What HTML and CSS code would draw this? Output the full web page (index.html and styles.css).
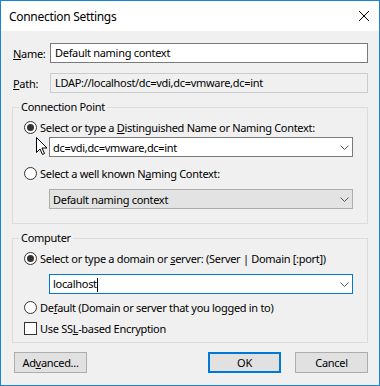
FILE: index.html
```html
<!DOCTYPE html>
<html lang="en">
<head>
    <meta charset="UTF-8">
    <title>Connection Settings</title>
    <link rel="stylesheet" href="styles.css">
</head>
<body>
    <div class="window">
        <div class="titlebar">
            <span class="title">Connection Settings</span>
            <span class="close">
                <svg width="10" height="10" viewBox="0 0 10 10"><path d="M0 0 L10 10 M10 0 L0 10" stroke="#000" stroke-width="1"/></svg>
            </span>
        </div>
        <div class="content">
            <div class="field-row">
                <label class="field-label"><u>N</u>ame:</label>
                <div class="textbox">Default naming context</div>
            </div>
            <div class="field-row path-row">
                <label class="field-label"><u>P</u>ath:</label>
                <div class="textbox readonly">LDAP://localhost/dc=vdi,dc=vmware,dc=int</div>
            </div>

            <fieldset class="group">
                <legend>Connection Point</legend>
                <div class="option">
                    <span class="radio checked"></span>
                    <span>Select or type a <u>D</u>istinguished Name or Naming Context:</span>
                </div>
                <div class="combo">
                    <span class="combo-text">dc=vdi,dc=vmware,dc=int</span>
                    <svg class="chevron" width="9" height="5" viewBox="0 0 9 5"><path d="M0.5 0.5 L4.5 4.5 L8.5 0.5" fill="none" stroke="#555" stroke-width="1"/></svg>
                </div>
                <div class="option spaced">
                    <span class="radio"></span>
                    <span>Select a well known N<u>a</u>ming Context:</span>
                </div>
                <div class="combo disabled spaced-combo">
                    <span class="combo-text">Default naming context</span>
                    <svg class="chevron" width="9" height="5" viewBox="0 0 9 5"><path d="M0.5 0.5 L4.5 4.5 L8.5 0.5" fill="none" stroke="#555" stroke-width="1"/></svg>
                </div>
            </fieldset>

            <fieldset class="group computer">
                <legend>Computer</legend>
                <div class="option">
                    <span class="radio checked"></span>
                    <span>Select or type a domain or <u>s</u>erver: (Server | Domain [:port])</span>
                </div>
                <div class="combo focused spaced-combo">
                    <span class="combo-text">localhost<span class="caret"></span></span>
                    <svg class="chevron" width="9" height="5" viewBox="0 0 9 5"><path d="M0.5 0.5 L4.5 4.5 L8.5 0.5" fill="none" stroke="#555" stroke-width="1"/></svg>
                </div>
                <div class="option near">
                    <span class="radio"></span>
                    <span>De<u>f</u>ault (Domain or server that you logged in to)</span>
                </div>
                <div class="option near">
                    <span class="checkbox"></span>
                    <span>Use SS<u>L</u>-based Encryption</span>
                </div>
            </fieldset>

            <div class="buttons">
                <button class="btn">Ad<u>v</u>anced...</button>
                <div class="spacer"></div>
                <button class="btn default">OK</button>
                <button class="btn">Cancel</button>
            </div>
        </div>

        <!-- mouse pointer over the first radio button -->
        <svg class="pointer" width="13" height="19" viewBox="0 0 13 19">
            <path d="M0.5 0.5 L0.5 15.5 L4 12 L6.5 17.5 L8.5 16.5 L6 11 L11 11 Z" fill="#fff" stroke="#000" stroke-width="1"/>
        </svg>
    </div>
</body>
</html>
```

FILE: styles.css
```css
body {
    margin: 0;
    font-family: 'Noto Sans', 'Liberation Sans', sans-serif;
    font-size: 11px;
    letter-spacing: -0.3px;
    color: #000;
    background: #fff;
}

.window {
    width: 378px;
    height: 384px;
    border: 1px solid #1883d7;
    background-color: #f0f0f0;
    position: relative;
}

.titlebar {
    height: 30px;
    background-color: #fff;
    display: flex;
    align-items: center;
    justify-content: space-between;
    padding: 0 10px 0 8px;
}

.title {
    font-size: 12px;
}

.close {
    display: flex;
}

.content {
    padding: 12px 11px 0 11px;
}

.field-row {
    display: flex;
    align-items: center;
}

.path-row {
    margin-top: 10px;
}

.field-label {
    width: 37px;
    padding-left: 1px;
}

.textbox {
    flex: 1;
    height: 18px;
    border: 1px solid #7a7a7a;
    background-color: #fff;
    padding: 0 4px;
    line-height: 18px;
}

.textbox.readonly {
    background-color: #f0f0f0;
    border-color: #cccccc;
}

.group {
    margin: 6px 0 0 0;
    padding: 4px 14px 14px 11px;
    border: 1px solid #dcdcdc;
    min-width: 0;
}

.group.computer {
    padding-bottom: 6px;
}

.group legend {
    padding: 0 2px;
    margin-left: -5px;
    line-height: 16px;
}

.option {
    display: flex;
    align-items: center;
    height: 16px;
    white-space: nowrap;
}

.option.spaced {
    margin-top: 8px;
}

.option.near {
    margin-top: 5px;
}

.radio {
    width: 11px;
    height: 11px;
    border: 1px solid #333;
    border-radius: 50%;
    background-color: #fff;
    margin-right: 3px;
    display: flex;
    align-items: center;
    justify-content: center;
    flex-shrink: 0;
}

.radio.checked::after {
    content: '';
    width: 7px;
    height: 7px;
    border-radius: 50%;
    background-color: #333;
}

.checkbox {
    width: 11px;
    height: 11px;
    border: 1px solid #333;
    background-color: #fff;
    margin-right: 3px;
    flex-shrink: 0;
}

.combo {
    margin: 2px 0 0 25px;
    height: 18px;
    border: 1px solid #7a7a7a;
    background-color: #fff;
    display: flex;
    align-items: center;
    justify-content: space-between;
    padding: 0 3px 0 3px;
}

.combo.spaced-combo {
    margin-top: 8px;
}

.combo.disabled {
    background-color: #e3e3e3;
    border-color: #adadad;
}

.combo.focused {
    border-color: #0078d7;
}

.caret {
    display: inline-block;
    width: 1px;
    height: 14px;
    background-color: #000;
    vertical-align: middle;
}

.buttons {
    display: flex;
    margin-top: 9px;
}

.spacer {
    flex: 1;
}

.btn {
    font: inherit;
    letter-spacing: inherit;
    color: #000;
    height: 21px;
    width: 73px;
    padding: 0;
    background-color: #e1e1e1;
    border: 1px solid #adadad;
    margin-left: 14px;
}

.btn:first-child {
    margin-left: 2px;
}

.btn.default {
    border: 2px solid #0078d7;
}

.pointer {
    position: absolute;
    left: 35px;
    top: 136px;
}
```
